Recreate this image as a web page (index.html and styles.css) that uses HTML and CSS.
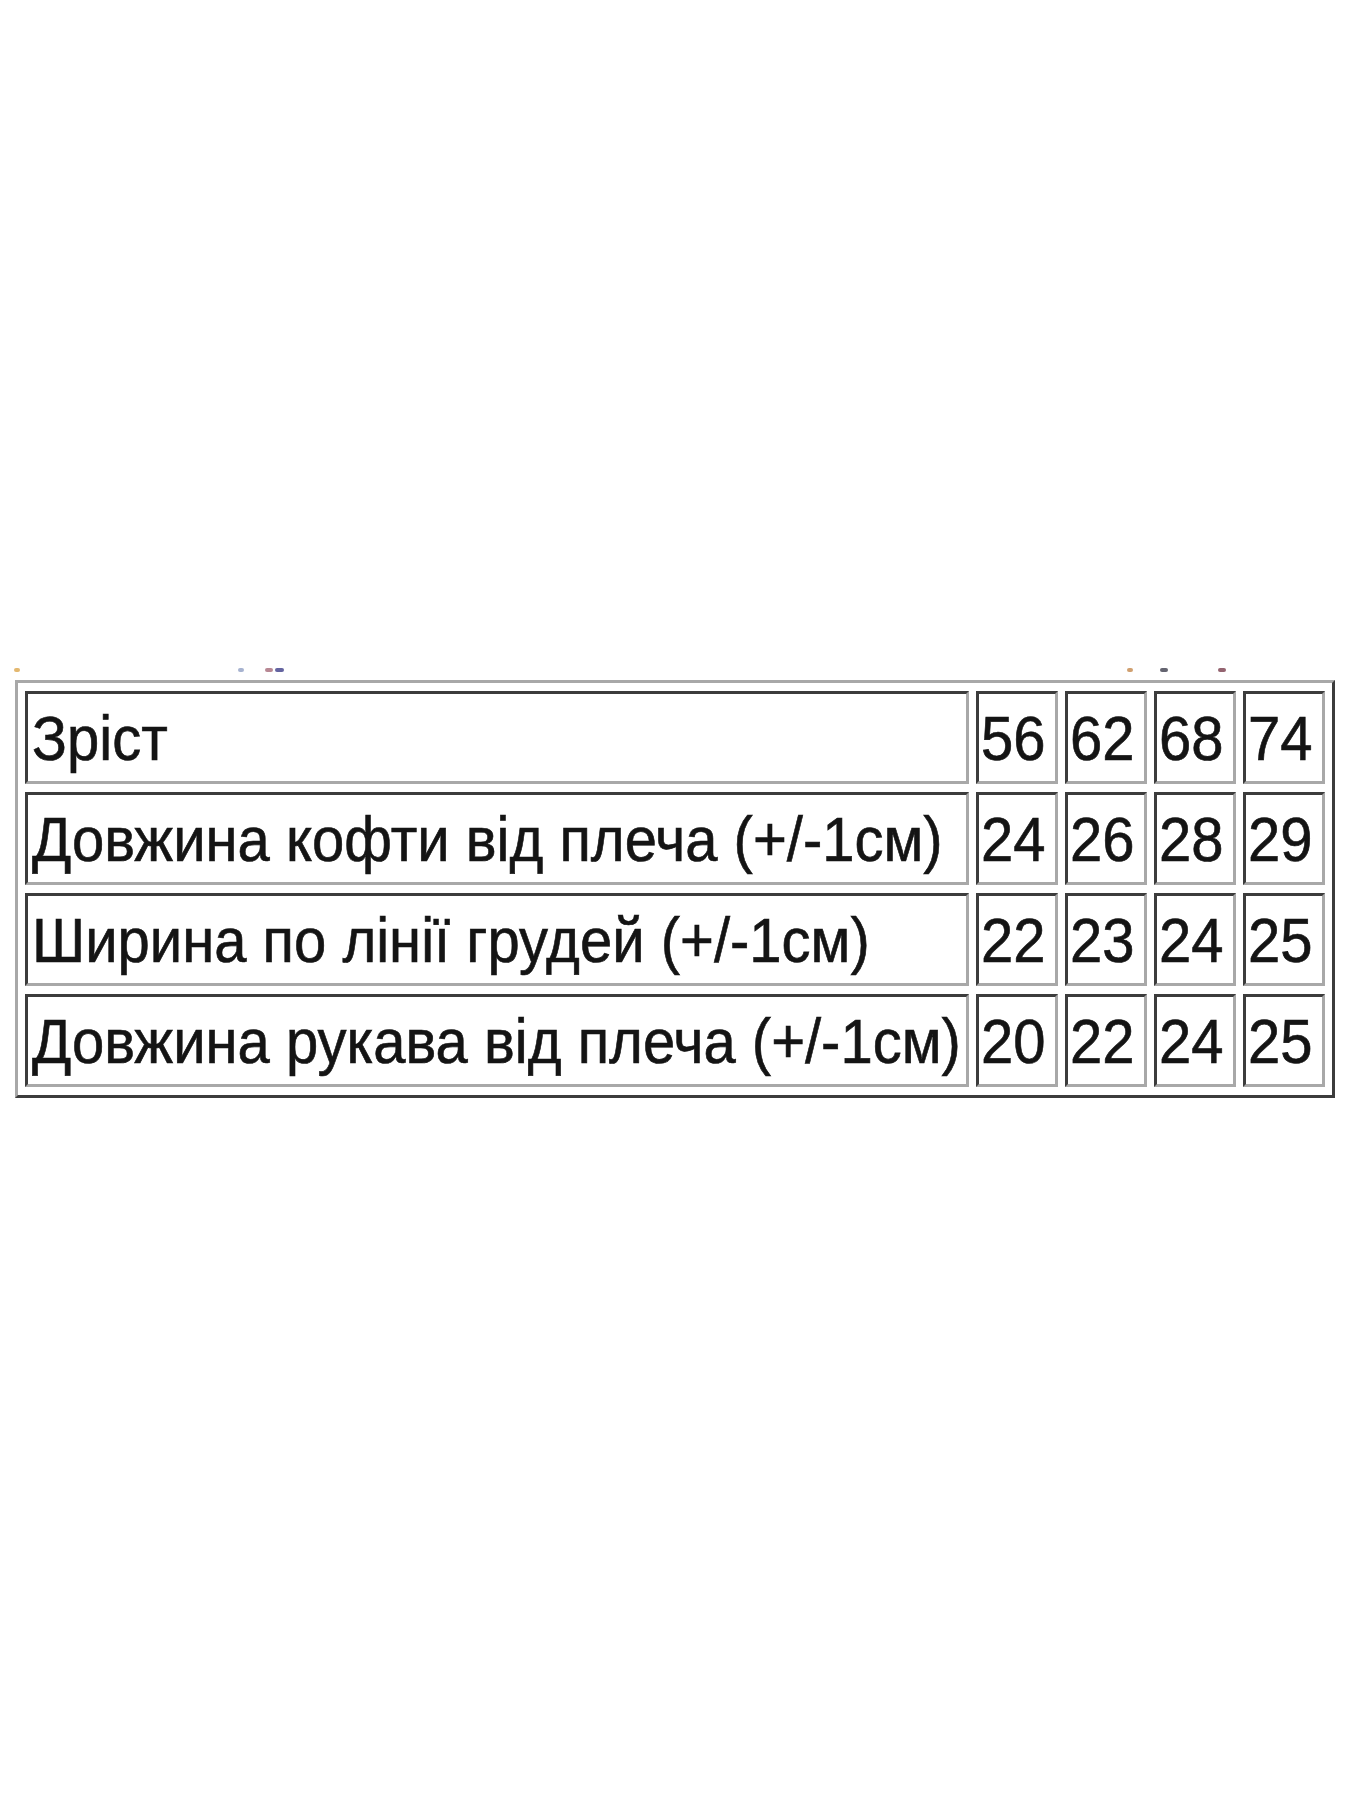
FILE: index.html
```html
<!DOCTYPE html>
<html lang="uk">
<head>
<meta charset="utf-8">
<title>Розмірна сітка</title>
<link rel="stylesheet" href="styles.css">
</head>
<body>
<div class="sheet">
  <div class="crumbs">
    <span class="dot d1"></span>
    <span class="dot d2"></span>
    <span class="dot d3"></span>
    <span class="dot d4"></span>
    <span class="dot d5"></span>
    <span class="dot d6"></span>
    <span class="dot d7"></span>
  </div>
  <table class="sizes">
    <tr><td class="label"><span>Зріст</span></td><td class="num"><span>56</span></td><td class="num"><span>62</span></td><td class="num"><span>68</span></td><td class="num"><span>74</span></td></tr>
    <tr><td class="label"><span>Довжина кофти від плеча (+/-1см)</span></td><td class="num"><span>24</span></td><td class="num"><span>26</span></td><td class="num"><span>28</span></td><td class="num"><span>29</span></td></tr>
    <tr><td class="label"><span>Ширина по лінії грудей (+/-1см)</span></td><td class="num"><span>22</span></td><td class="num"><span>23</span></td><td class="num"><span>24</span></td><td class="num"><span>25</span></td></tr>
    <tr><td class="label"><span>Довжина рукава від плеча (+/-1см)</span></td><td class="num"><span>20</span></td><td class="num"><span>22</span></td><td class="num"><span>24</span></td><td class="num"><span>25</span></td></tr>
  </table>
</div>
</body>
</html>
```

FILE: styles.css
```css
html, body {
  margin: 0;
  padding: 0;
  background: #ffffff;
}
.sheet {
  position: relative;
  width: 1350px;
  height: 1800px;
  padding-top: 680px;
  box-sizing: border-box;
}
.crumbs {
  position: absolute;
  left: 0;
  top: 668px;
  width: 1350px;
  height: 6px;
}
.dot {
  position: absolute;
  top: 0;
  height: 4px;
  width: 6px;
  border-radius: 2px;
  background: #6a6a8a;
  opacity: 0.75;
}
.d1 { left: 14px; background: #d9a040; }
.d2 { left: 238px; background: #8a9ac0; }
.d3 { left: 265px; width: 8px; background: #a06070; }
.d4 { left: 275px; width: 9px; background: #303080; }
.d5 { left: 1127px; background: #c08040; }
.d6 { left: 1160px; width: 8px; background: #303040; }
.d7 { left: 1218px; width: 8px; background: #703040; }
.sizes {
  margin-left: 15px;
  width: 1320px;
  height: 418px;
  border-collapse: separate;
  border-spacing: 7px 8px;
  border-style: solid;
  border-width: 3px;
  border-color: #a8a8a8 #3c3c3c #3c3c3c #a8a8a8;
  font-family: "Liberation Sans", Arial, sans-serif;
  font-size: 58px;
  color: #141414;
  -webkit-text-stroke: 0.6px #141414;
}
.sizes td {
  height: 87px;
  padding: 0 4px;
  border-style: solid;
  border-width: 3px;
  border-color: #3c3c3c #a8a8a8 #a8a8a8 #3c3c3c;
  vertical-align: middle;
  white-space: nowrap;
}
.sizes td span {
  display: inline-block;
  transform: scaleY(1.08);
}
.sizes .num {
  width: 72px;
  padding: 0 2px;
  text-align: left;
}
```
